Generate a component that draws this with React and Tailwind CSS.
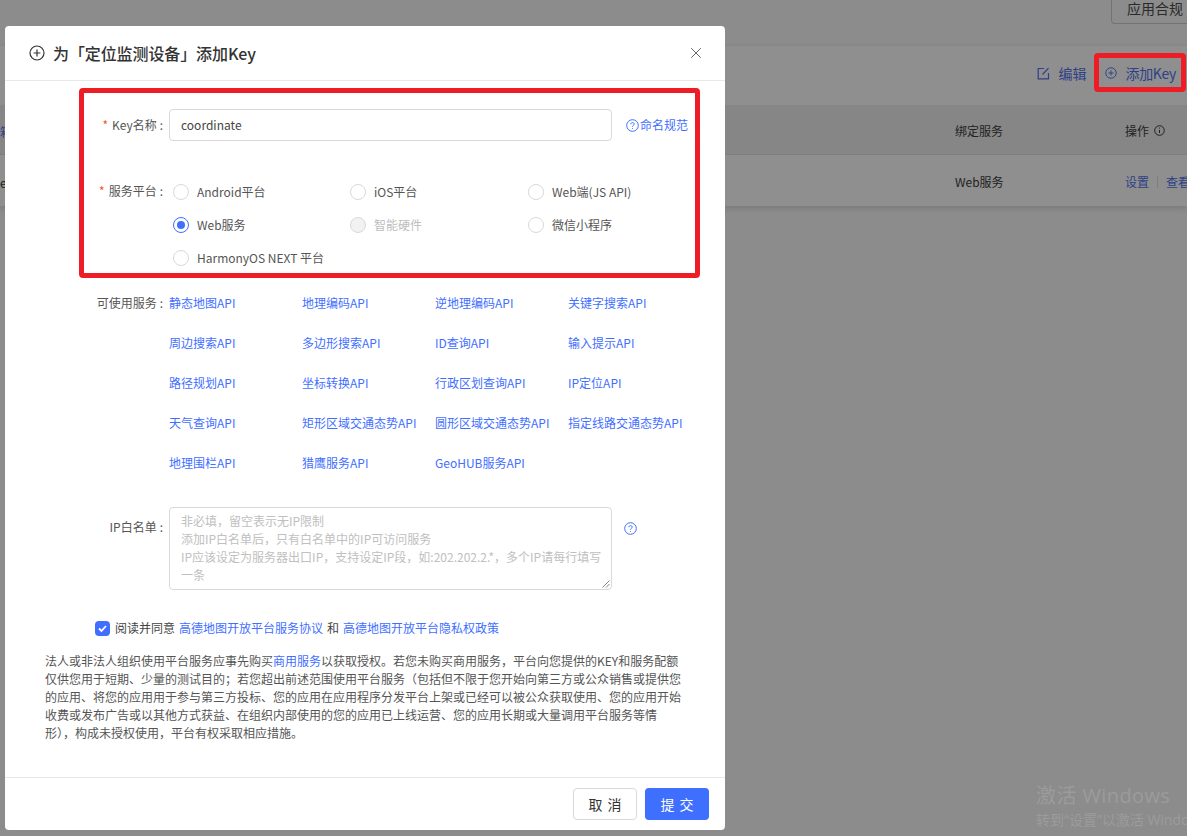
import React from 'react';
import { X } from 'lucide-react';

const font = 'font-["Noto_Sans_CJK_SC","Noto_Sans",sans-serif]';

const apis = [
  '静态地图API', '地理编码API', '逆地理编码API', '关键字搜索API',
  '周边搜索API', '多边形搜索API', 'ID查询API', '输入提示API',
  '路径规划API', '坐标转换API', '行政区划查询API', 'IP定位API',
  '天气查询API', '矩形区域交通态势API', '圆形区域交通态势API', '指定线路交通态势API',
  '地理围栏API', '猎鹰服务API', 'GeoHUB服务API',
];

const platforms = [
  { label: 'Android平台' },
  { label: 'iOS平台' },
  { label: 'Web端(JS API)' },
  { label: 'Web服务', checked: true },
  { label: '智能硬件', disabled: true },
  { label: '微信小程序' },
  { label: 'HarmonyOS NEXT 平台' },
];

const CirclePlus = ({ size = 16, className = '' }) => (
  <svg width={size} height={size} viewBox="0 0 16 16" fill="none" stroke="currentColor" strokeWidth="1.2" className={className}>
    <circle cx="8" cy="8" r="7" />
    <path d="M8 4.6v6.8M4.6 8h6.8" />
  </svg>
);

const Help = ({ className = '' }) => (
  <svg width="13" height="13" viewBox="0 0 13 13" fill="none" stroke="currentColor" strokeWidth="1" className={className}>
    <circle cx="6.5" cy="6.5" r="5.8" />
    <path d="M4.8 5.2c0-1 .8-1.6 1.7-1.6s1.7.6 1.7 1.5c0 1.3-1.7 1.3-1.7 2.6" />
    <path d="M6.5 9v.8" />
  </svg>
);

const Radio = ({ label, checked, disabled }) => (
  <label className="flex h-[33px] items-center">
    {checked ? (
      <span className="flex h-4 w-4 items-center justify-center rounded-full border border-[#3f6fff]">
        <span className="h-2 w-2 rounded-full bg-[#3f6fff]" />
      </span>
    ) : (
      <span className={`h-4 w-4 rounded-full border border-[#d9d9d9] ${disabled ? 'bg-[#f2f2f2]' : 'bg-white'}`} />
    )}
    <span className={`ml-2 whitespace-nowrap text-xs ${disabled ? 'text-[#bdbdbd]' : 'text-[#555]'}`}>{label}</span>
  </label>
);

const Background = () => (
  <div className="flex flex-col">
    <div className="flex h-[46px] items-start justify-end">
      <button className="h-[24px] w-[76px] rounded-bl-sm border-b border-l border-[#737373] pb-[7px] pl-[15px] text-left text-sm leading-4 text-[#2a2a2a]">应用合规</button>
    </div>
    <div className="bg-[#8e8f8e] shadow-[0_2px_6px_rgba(0,0,0,0.15)]">
      <div className="flex h-[59px] items-center justify-end pb-[5px] text-sm text-[#2f3f88]">
        <svg width="13" height="13" viewBox="0 0 13 13" fill="none" stroke="currentColor" strokeWidth="1.2" className="mr-[8px]">
          <path d="M7 1.5H1.2v10.3h10.3V6M5.5 7.5 11.5 1.2" />
        </svg>
        <span className="mr-[19px]">编辑</span>
        <CirclePlus size={12} className="mr-[8px]" />
        <span className="mr-[11px] tracking-[-0.3px]">添加Key</span>
      </div>
      <div className="flex h-[50px] items-center border-b border-[#7d7e7d] bg-[#858685] pt-[2px] text-xs text-[#222]">
        <span className="ml-[955px] w-[170px]">绑定服务</span>
        <span>操作</span>
        <svg width="11" height="11" viewBox="0 0 11 11" fill="none" stroke="currentColor" className="ml-[5px]">
          <circle cx="5.5" cy="5.5" r="4.8" />
          <path d="M5.5 5v3M5.5 2.6v1" />
        </svg>
      </div>
      <div className="flex h-[51px] items-center whitespace-nowrap pt-[2px] text-xs text-[#222]">
        <span className="ml-[955px] w-[170px] shrink-0">Web服务</span>
        <span className="shrink-0 text-[#2f3f88]">设置</span>
        <span className="mx-[8px] h-3 w-px shrink-0 bg-[#7d7e7d]" />
        <span className="shrink-0 text-[#2f3f88]">查看</span>
      </div>
    </div>
  </div>
);

export default function App() {
  return (
    <div className={`relative h-[836px] w-[1187px] overflow-hidden bg-[#8b8c8b] ${font}`}>
      <Background />

      {/* left edge of the table behind the dialog */}
      <span className="absolute left-0 top-[124px] text-xs text-[#2f3f88]">箱</span>
      <span className="absolute left-0 top-[175px] text-xs text-[#222]">e</span>

      {/* dialog */}
      <div className="absolute left-[5px] top-[26px] flex h-[804px] w-[720px] flex-col rounded-sm bg-white">
        <div className="flex h-[55px] shrink-0 items-center border-b border-[#e8e8e8] pl-6 pr-[20px] text-[#333]">
          <CirclePlus size={16} />
          <h2 className="ml-2 text-base font-medium tracking-[-0.1px]">为「定位监测设备」添加Key</h2>
          <X size={18} strokeWidth={1.2} className="ml-auto text-[#555]" />
        </div>

        <div className="flex-1 pt-[28px]">
          <div className="flex items-center">
            <label className="w-[158px] text-right text-xs text-[#555]">
              <span className="mr-1 text-[#f5532d]">*</span>Key名称<span className="ml-[3px]">:</span>
            </label>
            <div className="ml-[6px] flex h-[32px] w-[443px] items-center rounded-sm border border-[#d9d9d9] px-[11px] text-xs text-[#444]">coordinate</div>
            <a className="ml-[14px] flex items-center gap-px whitespace-nowrap text-xs text-[#3f6fff]"><Help />命名规范</a>
          </div>

          <div className="mt-[34px] flex">
            <label className="w-[158px] pt-[8px] text-right text-xs text-[#555]">
              <span className="mr-1 text-[#f5532d]">*</span>服务平台<span className="ml-[3px]">:</span>
            </label>
            <div className="ml-[10px] grid w-[532px] grid-cols-[177px_178px_1fr]">
              {platforms.map((p) => <Radio key={p.label} {...p} />)}
            </div>
          </div>

          <div className="mt-[13px] flex">
            <label className="w-[158px] pt-[8px] text-right text-xs text-[#555]">可使用服务<span className="ml-[3px]">:</span></label>
            <div className="ml-[6px] grid w-[532px] grid-cols-[133px_133px_133px_1fr]">
              {apis.map((a) => (
                <a key={a} className="flex h-10 items-start whitespace-nowrap pt-[8px] text-xs text-[#3f6fff]">{a}</a>
              ))}
            </div>
          </div>

          <div className="mt-[20px] flex items-start">
            <label className="w-[158px] pt-[12px] text-right text-xs text-[#555]">IP白名单<span className="ml-[3px]">:</span></label>
            <div className="relative ml-[6px] h-[83px] w-[443px] whitespace-nowrap rounded-sm border border-[#d9d9d9] px-[11px] pt-[4px] text-xs leading-[18px] text-[#c0c0c0]">
              <p>非必填，留空表示无IP限制</p>
              <p>添加IP白名单后，只有白名单中的IP可访问服务</p>
              <p>IP应该设定为服务器出口IP，支持设定IP段，如:202.202.2.*，多个IP请每行填写</p>
              <p>一条</p>
              <svg width="8" height="8" viewBox="0 0 8 8" stroke="#666" strokeWidth="0.8" className="absolute bottom-px right-px">
                <path d="M0.5 7.5 7.5 0.5M4 7.5 7.5 4" />
              </svg>
            </div>
            <Help className="ml-3 mt-[15px] text-[#3f6fff]" />
          </div>

          <div className="ml-[90px] mt-[30px] flex items-center text-xs text-[#444]">
            <span className="mr-[5px] flex h-[15px] w-[15px] items-center justify-center rounded-sm bg-[#3f6fff]">
              <svg width="11" height="11" viewBox="0 0 11 11" fill="none" stroke="white" strokeWidth="1.8">
                <path d="M2 5.5 4.5 8 9 3" />
              </svg>
            </span>
            阅读并同意 <a className="mx-1 text-[#3f6fff]">高德地图开放平台服务协议</a> 和 <a className="ml-1 text-[#3f6fff]">高德地图开放平台隐私权政策</a>
          </div>

          <div className="ml-[40px] mt-[16px] w-[640px] whitespace-nowrap text-xs leading-[18px] text-[#555]">
            <p>法人或非法人组织使用平台服务应事先购买<a className="text-[#3f6fff]">商用服务</a>以获取授权。若您未购买商用服务，平台向您提供的KEY和服务配额</p>
            <p>仅供您用于短期、少量的测试目的；若您超出前述范围使用平台服务（包括但不限于您开始向第三方或公众销售或提供您</p>
            <p>的应用、将您的应用用于参与第三方投标、您的应用在应用程序分发平台上架或已经可以被公众获取使用、您的应用开始</p>
            <p>收费或发布广告或以其他方式获益、在组织内部使用的您的应用已上线运营、您的应用长期或大量调用平台服务等情</p>
            <p>形），构成未授权使用，平台有权采取相应措施。</p>
          </div>
        </div>

        <div className="flex h-[53px] shrink-0 items-center justify-end gap-2 border-t border-[#e8e8e8] pr-4">
          <button className="h-8 w-16 rounded-sm border border-[#d9d9d9] pl-[5px] text-sm tracking-[5px] text-[#333]">取消</button>
          <button className="h-8 w-16 rounded-sm bg-[#3f6fff] pl-[5px] text-sm tracking-[5px] text-white">提交</button>
        </div>
      </div>

      {/* red annotation boxes drawn over the screenshot */}
      <div className="pointer-events-none absolute left-[79px] top-[88px] h-[190px] w-[621px] rounded-sm border-[5px] border-[#ee1c25]" />
      <div className="pointer-events-none absolute left-[1094px] top-[53px] h-[39px] w-[92px] rounded-sm border-[5px] border-[#ee1c25]" />

      {/* activation watermark */}
      <div className="pointer-events-none absolute left-[1036px] top-[784px] whitespace-nowrap font-['Open_Sans','Noto_Sans_CJK_SC',sans-serif] text-[#9b9c9b]">
        <p className="text-xl leading-6 tracking-[0.4px]">激活 Windows</p>
        <p className="mt-[2px] text-sm leading-5">转到“设置”以激活 Windows。</p>
      </div>
    </div>
  );
}
